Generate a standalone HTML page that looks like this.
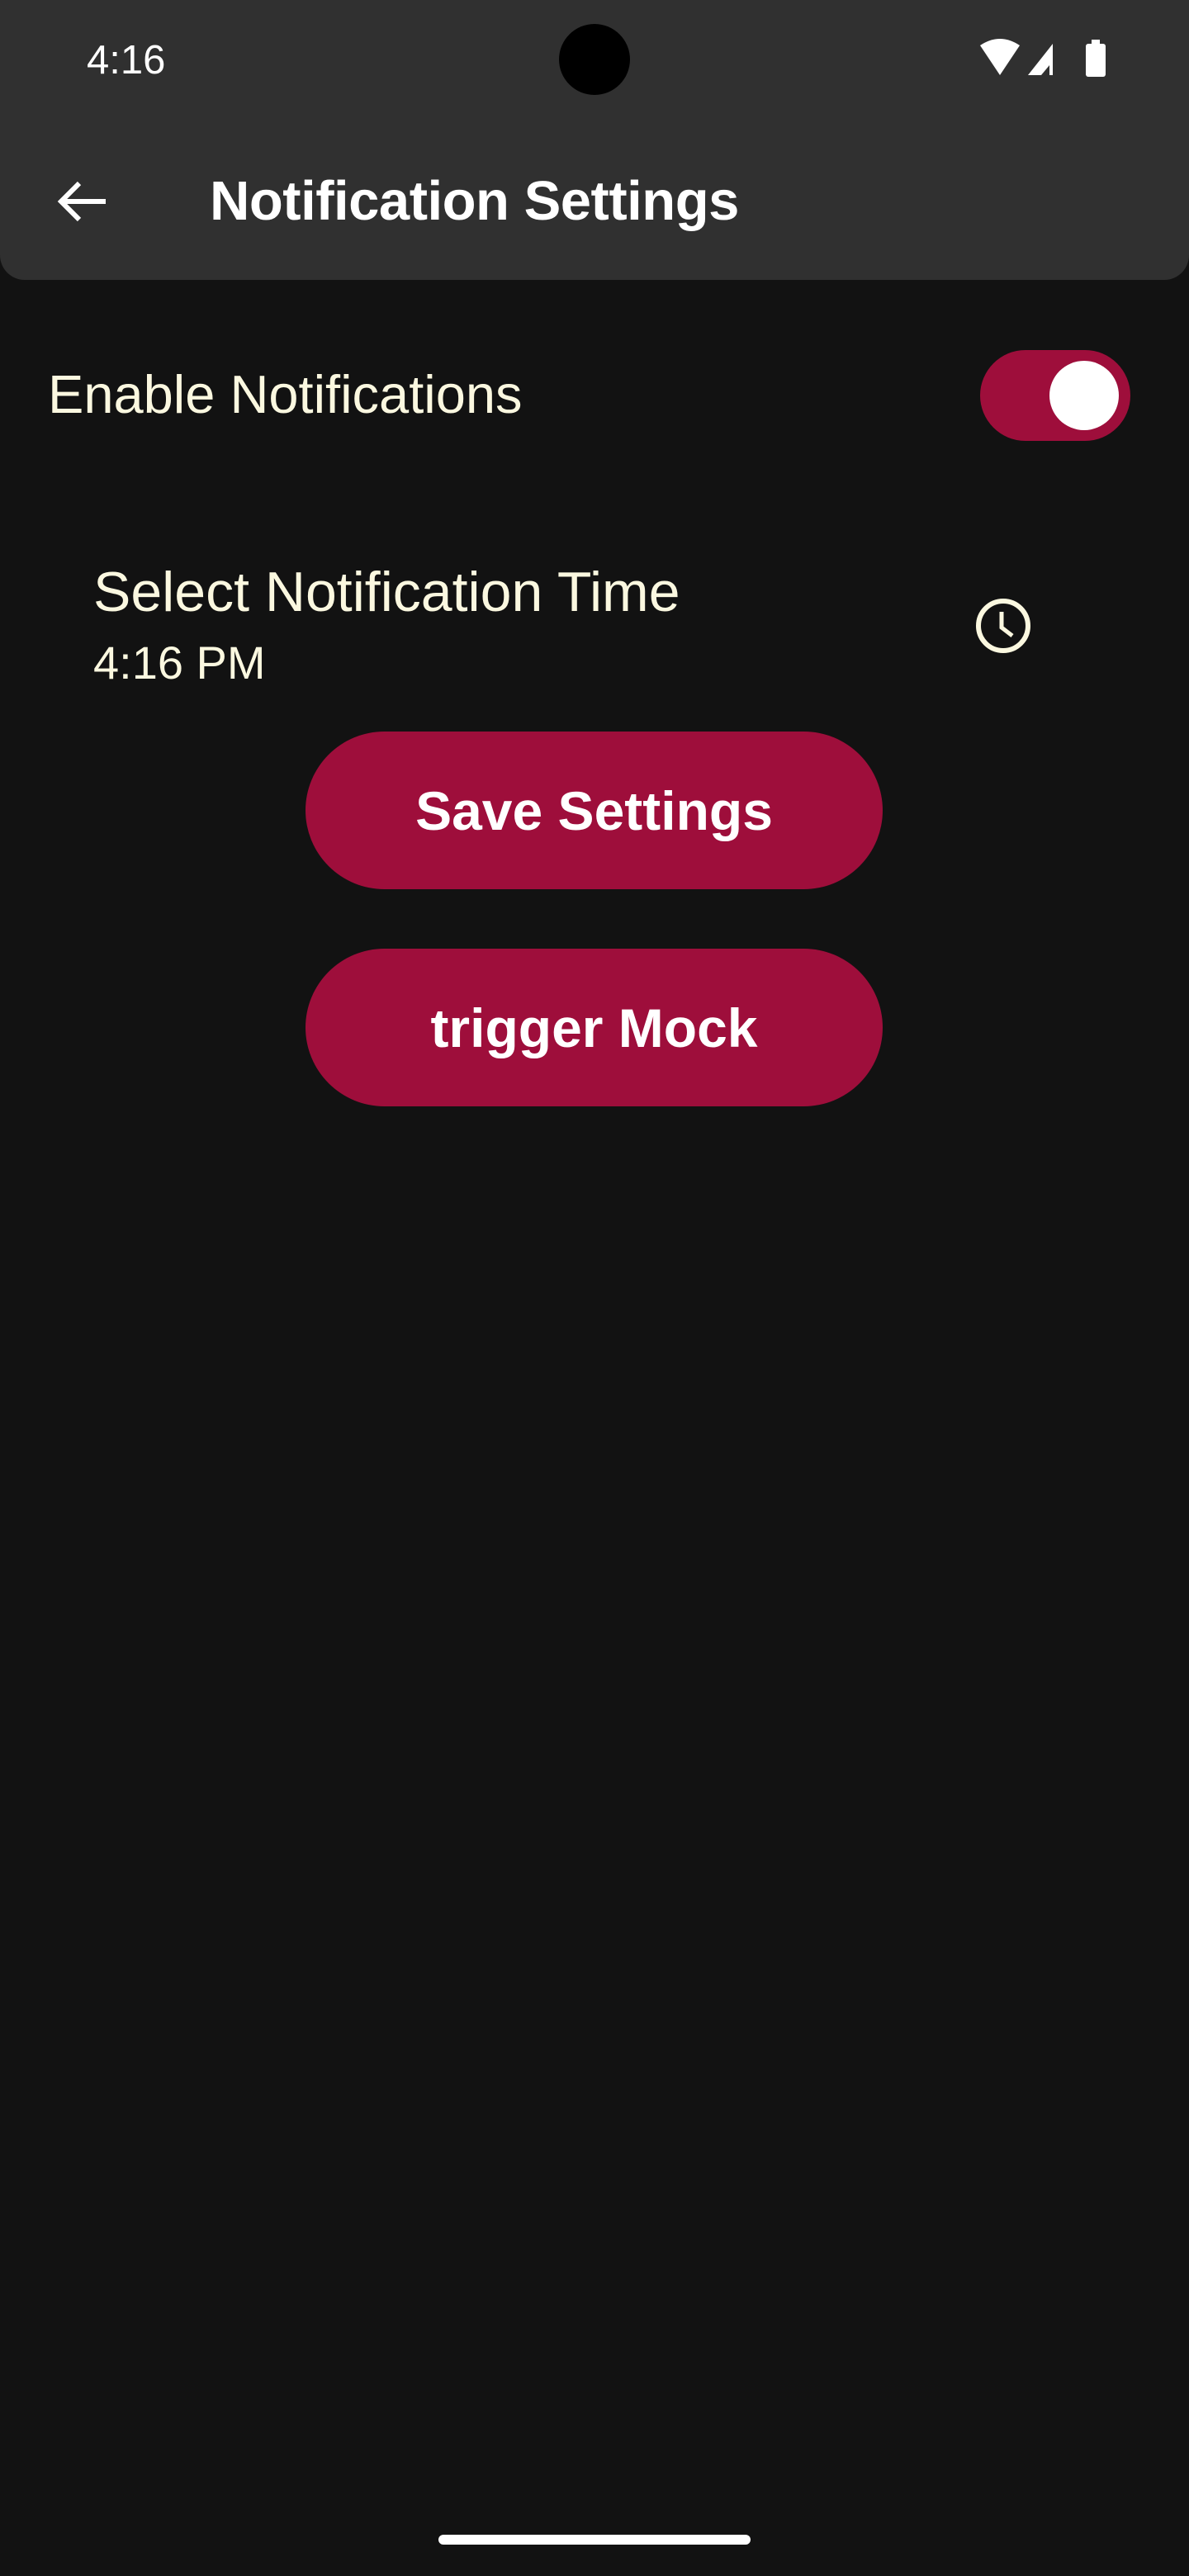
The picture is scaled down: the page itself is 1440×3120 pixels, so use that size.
<!DOCTYPE html>
<html><head><meta charset="utf-8"><style>
*{margin:0;padding:0;box-sizing:border-box}
body{width:1440px;height:3120px;background:#121212;position:relative;overflow:hidden;font-family:"Liberation Sans",sans-serif}
.top{position:absolute;left:0;top:0;width:1440px;height:339px;background:#303030;border-radius:0 0 30px 30px}
.t{position:absolute;white-space:nowrap;line-height:1}
.btn{position:absolute;left:370px;width:699px;height:191px;border-radius:96px;background:#9e0e3b;color:#fff;font-weight:bold;font-size:66px;display:flex;align-items:center;justify-content:center}
.cream{color:#fbf8e0}
</style></head><body>
<div class="top"></div>
<div class="t" style="left:105px;top:49px;font-size:49px;color:#fff">4:16</div>
<div style="position:absolute;left:677px;top:29px;width:86px;height:86px;border-radius:50%;background:#000"></div>
<svg style="position:absolute;left:1185px;top:45px" width="160" height="52" viewBox="0 0 160 52">
<path d="M2 10 Q26 -6 50 10 L26 46 Z" fill="#fff"/>
<path d="M60 46 L90 8 L90 46 Z" fill="#fff"/>
<path d="M76 46 L86 34 L86 46 Z" fill="#303030"/>
<rect x="130" y="8" width="24" height="40" rx="3" fill="#fff"/>
<rect x="137" y="3" width="10" height="6" fill="#fff"/>
</svg>
<svg style="position:absolute;left:66px;top:216px" width="66" height="56" viewBox="0 0 66 56">
<path d="M62 28 H8 M30 6 L8 28 L30 50" stroke="#fff" stroke-width="6" fill="none"/>
</svg>
<div class="t" style="left:254px;top:210px;font-size:67px;font-weight:bold;color:#fff;letter-spacing:-0.5px">Notification Settings</div>
<div class="t cream" style="left:58px;top:445px;font-size:65px">Enable Notifications</div>
<div style="position:absolute;left:1187px;top:424px;width:182px;height:110px;border-radius:55px;background:#9e0e3b"></div>
<div style="position:absolute;left:1271px;top:437px;width:84px;height:84px;border-radius:50%;background:#fff"></div>
<div class="t cream" style="left:113px;top:683px;font-size:68px">Select Notification Time</div>
<div class="t cream" style="left:113px;top:775px;font-size:56px">4:16 PM</div>
<svg style="position:absolute;left:1180px;top:723px" width="70" height="70" viewBox="0 0 70 70">
<circle cx="35" cy="35" r="30" stroke="#fbf8e0" stroke-width="6" fill="none"/>
<path d="M33 18 V37 L46 47" stroke="#fbf8e0" stroke-width="5" fill="none"/>
</svg>
<div class="btn" style="top:886px">Save Settings</div>
<div class="btn" style="top:1149px">trigger Mock</div>
<div style="position:absolute;left:531px;top:3070px;width:378px;height:12px;border-radius:6px;background:#fff"></div>
</body></html>
